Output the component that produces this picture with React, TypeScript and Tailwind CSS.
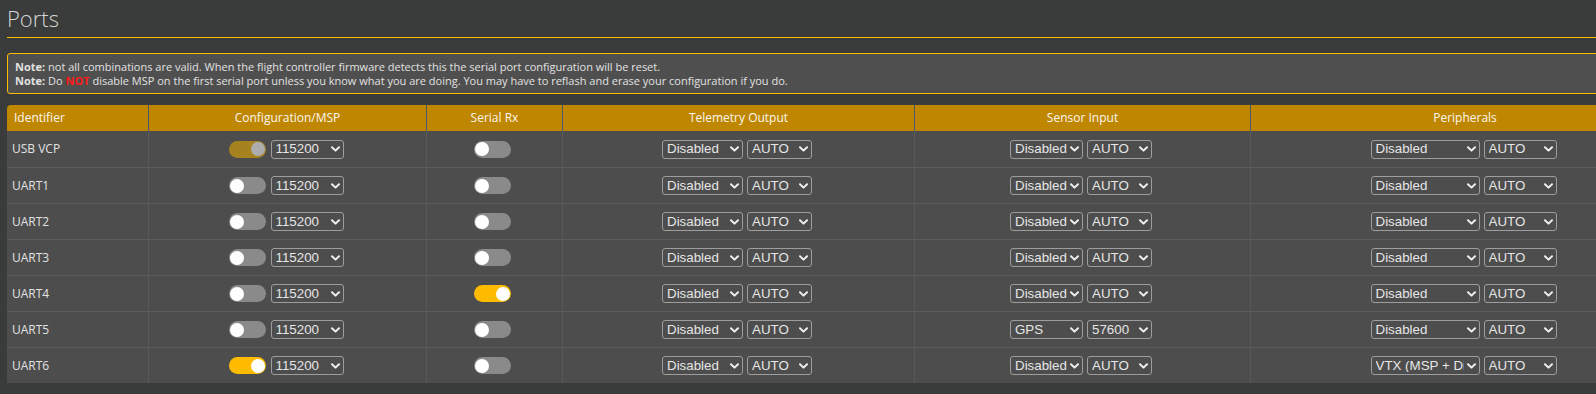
import React from "react";

type Row = {
  id: string;
  msp: "off" | "on" | "locked";
  rx: boolean;
  sensor: [string, string];
  periph: string;
};

const rows: Row[] = [
  { id: "USB VCP", msp: "locked", rx: false, sensor: ["Disabled", "AUTO"], periph: "Disabled" },
  { id: "UART1", msp: "off", rx: false, sensor: ["Disabled", "AUTO"], periph: "Disabled" },
  { id: "UART2", msp: "off", rx: false, sensor: ["Disabled", "AUTO"], periph: "Disabled" },
  { id: "UART3", msp: "off", rx: false, sensor: ["Disabled", "AUTO"], periph: "Disabled" },
  { id: "UART4", msp: "off", rx: true, sensor: ["Disabled", "AUTO"], periph: "Disabled" },
  { id: "UART5", msp: "off", rx: false, sensor: ["GPS", "57600"], periph: "Disabled" },
  { id: "UART6", msp: "on", rx: false, sensor: ["Disabled", "AUTO"], periph: "VTX (MSP + DisplayPort)" },
];

function Chevron() {
  return (
    <svg width="9" height="6" viewBox="0 0 9 6" className="shrink-0">
      <path d="M1 1.2 L4.5 4.6 L8 1.2" fill="none" stroke="#eeeeee" strokeWidth="2" strokeLinecap="round" strokeLinejoin="round" />
    </svg>
  );
}

function FakeSelect({ value, w }: { value: string; w: string }) {
  return (
    <div
      className={`${w} h-[19px] shrink-0 flex items-center border border-[#9d9d9d] rounded-[3px] pl-[4px] pr-[3px] text-[13.33px] leading-none text-[#e6e6e6]`}
      style={{ fontFamily: '"Liberation Sans", Arial, sans-serif' }}
    >
      <span className="flex-1 min-w-0 overflow-hidden whitespace-nowrap">{value}</span>
      <span className="ml-[3px] flex items-center">
        <Chevron />
      </span>
    </div>
  );
}

function Toggle({ state }: { state: "off" | "on" | "locked" }) {
  const track =
    state === "on" ? "bg-[#ffbb00]" : state === "locked" ? "bg-[#a6831f]" : "bg-[#8a8a8a]";
  const knob = state === "locked" ? "bg-[#adadad]" : "bg-white";
  const pos = state === "off" ? "justify-start" : "justify-end";
  return (
    <div className={`w-[37px] h-[17px] rounded-full ${track} flex items-center ${pos} px-[1px] shrink-0`}>
      <div className={`w-[14px] h-[14px] rounded-full ${knob}`} />
    </div>
  );
}

const cols = "grid grid-cols-[141px_278px_136px_352px_336px_429px]";

export default function App() {
  return (
    <div
      className="w-full h-[394px] overflow-hidden bg-[#3a3c3b]"
      style={{ fontFamily: '"Open Sans", "Noto Sans", sans-serif' }}
    >
      <div className="w-[1700px] pl-[7px]">
        <div className="pt-[3px] pb-[4px] border-b border-[#ffbb00] w-[1672px]">
          <h1 className="text-[22px] leading-[30px] font-light text-[#d4d4d4]">Ports</h1>
        </div>

        <div className="mt-[15px] w-[1672px] border border-[#ffbb00] rounded-[3px] bg-[#4f4f4f] pl-[7px] pt-[6px] pb-[5px] text-[11px] leading-[14px] text-[#e2e2e2]">
          <div>
            <b className="font-bold">Note:</b> not all combinations are valid. When the flight controller firmware detects this the serial port configuration will be reset.
          </div>
          <div>
            <b className="font-bold">Note:</b> Do <b className="font-bold text-[#ff1a1a]">NOT</b> disable MSP on the first serial port unless you know what you are doing. You may have to reflash and erase your configuration if you do.
          </div>
        </div>

        <div className="mt-[11px] w-[1672px] bg-[#4d4d4d] rounded-tl-[4px] overflow-hidden">
          <div className={`${cols} h-[26px] bg-[#bf8602] text-[12px] text-[#fbf7ee]`}>
            <div className="flex items-center pl-[7px]">Identifier</div>
            <div className="flex items-center justify-center border-l border-[#4f5568]">Configuration/MSP</div>
            <div className="flex items-center justify-center border-l border-[#4f5568]">Serial Rx</div>
            <div className="flex items-center justify-center border-l border-[#4f5568]">Telemetry Output</div>
            <div className="flex items-center justify-center border-l border-[#4f5568]">Sensor Input</div>
            <div className="flex items-center justify-center border-l border-[#4f5568]">Peripherals</div>
          </div>
          {rows.map((r, i) => (
            <div
              key={r.id}
              className={`${cols} h-[36px] text-[12px] text-[#e2e2e2] ${i > 0 ? "border-t border-[#5c5c5c]" : ""}`}
            >
              <div className="flex items-center pl-[5px]">{r.id}</div>
              <div className="flex items-center justify-center gap-[5px] border-l border-[#5a5a5a] pr-[3px]">
                <Toggle state={r.msp} />
                <FakeSelect value="115200" w="w-[73px]" />
              </div>
              <div className="flex items-center justify-center border-l border-[#5a5a5a] pr-[4px]">
                <Toggle state={r.rx ? "on" : "off"} />
              </div>
              <div className="flex items-center justify-center gap-[4px] border-l border-[#5a5a5a] pr-[3px]">
                <FakeSelect value="Disabled" w="w-[81px]" />
                <FakeSelect value="AUTO" w="w-[65px]" />
              </div>
              <div className="flex items-center justify-center gap-[4px] border-l border-[#5a5a5a] pr-[3px]">
                <FakeSelect value={r.sensor[0]} w="w-[73px]" />
                <FakeSelect value={r.sensor[1]} w="w-[65px]" />
              </div>
              <div className="flex items-center justify-center gap-[4px] border-l border-[#5a5a5a] pr-[3px]">
                <FakeSelect value={r.periph} w="w-[109px]" />
                <FakeSelect value="AUTO" w="w-[73px]" />
              </div>
            </div>
          ))}
        </div>
      </div>
    </div>
  );
}
